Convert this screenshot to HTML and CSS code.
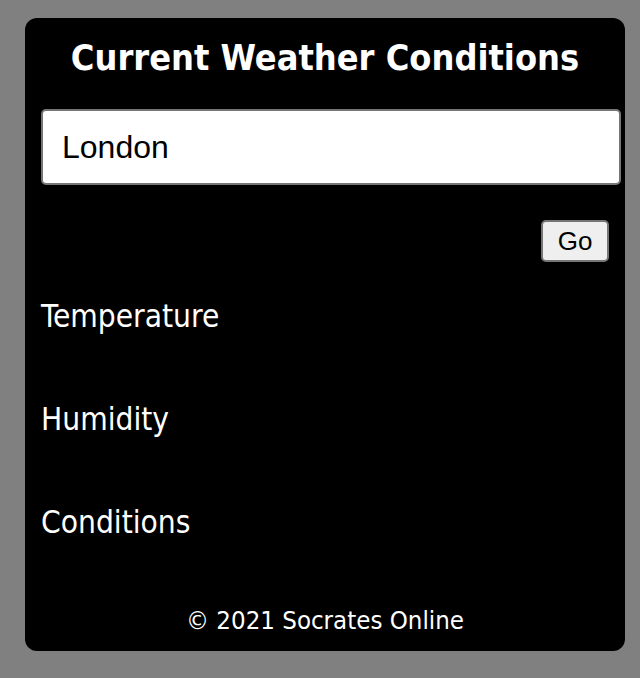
FILE: index.html
```html
<!DOCTYPE html>
<html>
<head>
<meta charset="utf-8">
<link rel="stylesheet" href="styles.css">
</head>
<body>
<div class="card">
  <h1 class="title">Current Weather Conditions</h1>
  <input class="city" type="text" value="London">
  <div class="actions"><button class="go">Go</button></div>
  <div class="field">Temperature</div>
  <div class="field">Humidity</div>
  <div class="field">Conditions</div>
  <footer class="footer">© 2021 Socrates Online</footer>
</div>
</body>
</html>
```
FILE: styles.css
```css
html, body {
  margin: 0;
  background: #808080;
}
body {
  padding: 18px 15px 0 25px;
  height: 678px;
  box-sizing: border-box;
  overflow: hidden;
}
.card {
  width: 600px;
  height: 633px;
  box-sizing: border-box;
  background: #000;
  border-radius: 12px;
  padding: 0 16px;
  color: #fff;
  font-family: "DejaVu Sans Condensed", "DejaVu Sans", sans-serif;
  display: flex;
  flex-direction: column;
}
.title {
  margin: 20px 0 0;
  font-size: 35.8px;
  line-height: 40px;
  font-weight: bold;
  text-align: center;
}
.city {
  margin-top: 31px;
  width: 580px;
  height: 76px;
  box-sizing: border-box;
  border: 2px solid #767676;
  border-radius: 5px;
  padding: 0 19px;
  font-family: "Liberation Sans", Arial, sans-serif;
  font-size: 32px;
  color: #000;
  background: #fff;
  outline: none;
}
.actions {
  display: flex;
  justify-content: flex-end;
  margin-top: 35px;
}
.go {
  width: 68px;
  height: 42px;
  box-sizing: border-box;
  border: 2px solid #767676;
  border-radius: 5px;
  background: #efefef;
  font-family: "Liberation Sans", Arial, sans-serif;
  font-size: 26px;
  color: #000;
  padding: 0;
}
.field {
  font-size: 31.4px;
  line-height: 40px;
  margin-top: 34px;
}
.field + .field {
  margin-top: 63px;
}
.footer {
  margin-top: auto;
  margin-bottom: 16px;
  text-align: center;
  font-size: 25.6px;
  line-height: 30px;
}
```
